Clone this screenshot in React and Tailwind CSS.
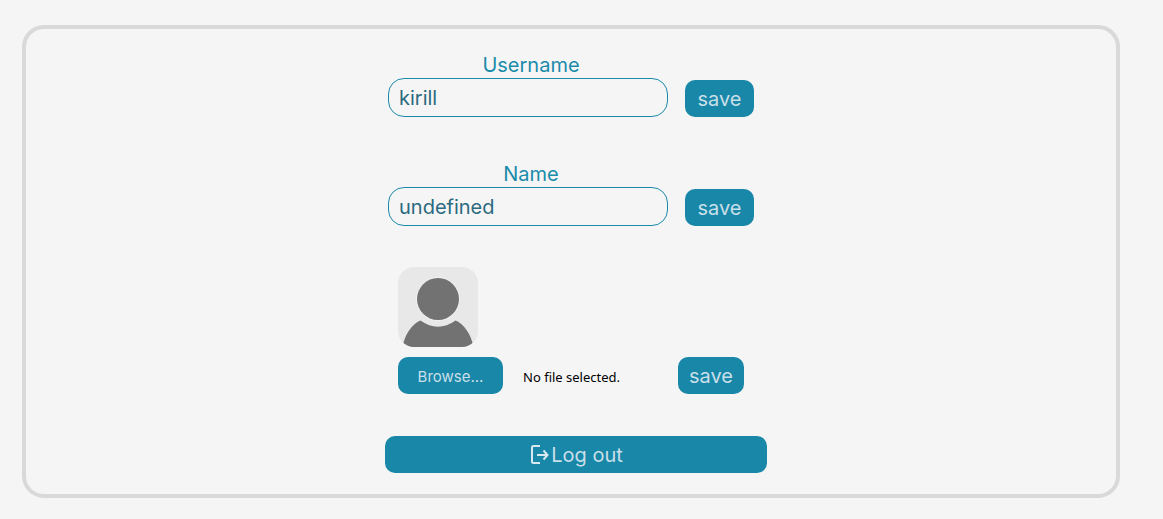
import { useState } from "react";

const buttonStyle =
  "flex h-[37px] items-center justify-center rounded-[10px] bg-[#1887a8] text-[#c9dfe9] cursor-pointer";

function LogoutIcon() {
  return (
    <svg
      viewBox="0 0 20 20"
      className="h-5 w-5 text-[#d8e8f0]"
      fill="none"
      stroke="currentColor"
      strokeWidth="2"
      aria-hidden="true"
    >
      <path d="M11 1H4.500Q3 1 3 2.500V16.500Q3 18 4.500 18H11" />
      <path d="M8 10H18.500" />
      <path d="M14.500 5.500L18.500 10L14.500 14.500" />
    </svg>
  );
}

function Avatar() {
  return (
    <svg viewBox="0 0 80 80" className="h-20 w-20 rounded-2xl bg-[#e8e8e8]" role="img" aria-label="Avatar">
      <circle cx="40" cy="32" r="21.500" fill="none" stroke="#f1f1f1" />
      <circle cx="40" cy="32" r="21" fill="#727272" />
      <path
        d="M4.500 80C7 67 14 57 22.500 53.500Q40 66 57.500 53.500C66 57 73 67 75.500 80Z"
        fill="#727272"
      />
    </svg>
  );
}

function TextField({ id, label, initial }) {
  const [value, setValue] = useState(initial);
  return (
    <div className="flex items-end pl-[3px]">
      <div className="flex w-[280px] flex-col">
        <label htmlFor={id} className="pl-1.5 text-center leading-6 text-[#1b8bab]">
          {label}
        </label>
        <input
          id={id}
          type="text"
          value={value}
          onChange={(e) => setValue(e.target.value)}
          className="mt-px h-[39px] w-full rounded-2xl border border-[#1b8bab] bg-transparent px-2.5 text-[#2b6a80] outline-none"
        />
      </div>
      <button type="button" className={`${buttonStyle} ml-[17px] w-[69px]`}>
        save
      </button>
    </div>
  );
}

export default function App() {
  const [fileName, setFileName] = useState("No file selected.");
  return (
    <div className="min-h-screen bg-[#f5f5f5] pt-[25px] pr-[43px] pb-[21px] pl-[22px] font-['Inter',sans-serif] text-xl">
      <main className="flex justify-center rounded-[22px] border-4 border-[#d9d9d9] pt-6 pb-[21px] pl-2.5">
        <div className="flex w-[382px] flex-col">
          <div className="flex flex-col gap-[45px]">
            <TextField id="username" label="Username" initial="kirill" />
            <TextField id="name" label="Name" initial="undefined" />
          </div>
          <div className="mt-[41px] flex flex-col gap-2.5 px-[13px]">
            <Avatar />
            <div className="flex items-center">
              <input
                id="avatar-file"
                type="file"
                className="sr-only"
                onChange={(e) => setFileName(e.target.files[0]?.name ?? "No file selected.")}
              />
              <label htmlFor="avatar-file" className={`${buttonStyle} w-[105px] pt-0.5 text-[15px]`}>
                Browse...
              </label>
              <span className="ml-5 flex-1 truncate pt-1 font-['Noto_Sans',sans-serif] text-[13px] text-black">
                {fileName}
              </span>
              <button type="button" className={`${buttonStyle} mr-2.5 w-[66px]`}>
                save
              </button>
            </div>
          </div>
          <button type="button" className={`${buttonStyle} mt-[42px] w-full gap-0.5`}>
            <LogoutIcon />
            Log out
          </button>
        </div>
      </main>
    </div>
  );
}
